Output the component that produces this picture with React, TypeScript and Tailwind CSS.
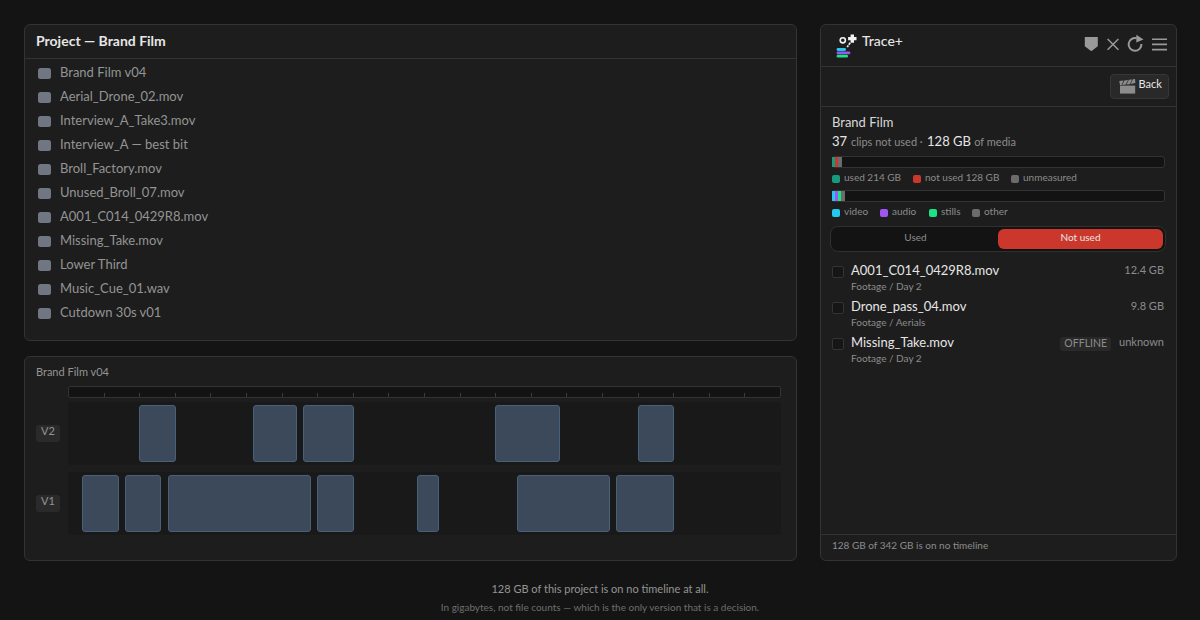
import { Fragment } from "react";

interface Clip {
  start: number;
  span: number;
}

interface Segment {
  label: string;
  swatch: string;
  gap: string;
}

const bin = [
  "Brand Film v04",
  "Aerial_Drone_02.mov",
  "Interview_A_Take3.mov",
  "Interview_A — best bit",
  "Broll_Factory.mov",
  "Unused_Broll_07.mov",
  "A001_C014_0429R8.mov",
  "Missing_Take.mov",
  "Lower Third",
  "Music_Cue_01.wav",
  "Cutdown 30s v01",
];

const v2: Clip[] = [
  { start: 10, span: 5 },
  { start: 26, span: 6 },
  { start: 33, span: 7 },
  { start: 60, span: 9 },
  { start: 80, span: 5 },
];

const v1: Clip[] = [
  { start: 2, span: 5 },
  { start: 8, span: 5 },
  { start: 14, span: 20 },
  { start: 35, span: 5 },
  { start: 49, span: 3 },
  { start: 63, span: 13 },
  { start: 77, span: 8 },
];

const usage: Segment[] = [
  { label: "used 214 GB", swatch: "bg-[#16997c]", gap: "w-[81px]" },
  { label: "not used 128 GB", swatch: "bg-[#cb382b]", gap: "w-[98px]" },
  { label: "unmeasured", swatch: "bg-[#6b6b6b]", gap: "w-[90px]" },
];

const kinds: Segment[] = [
  { label: "video", swatch: "bg-[#22c8f0]", gap: "w-12" },
  { label: "audio", swatch: "bg-[#a055f0]", gap: "w-[49px]" },
  { label: "stills", swatch: "bg-[#1be283]", gap: "w-[43px]" },
  { label: "other", swatch: "bg-[#6b6b6b]", gap: "w-[60px]" },
];

const files = [
  { name: "A001_C014_0429R8.mov", path: "Footage / Day 2", size: "12.4 GB", offline: false },
  { name: "Drone_pass_04.mov", path: "Footage / Aerials", size: "9.8 GB", offline: false },
  { name: "Missing_Take.mov", path: "Footage / Day 2", size: "unknown", offline: true },
];

function Logo() {
  return (
    <svg className="h-6 w-[22px]" viewBox="0 0 22 24" fill="none">
      <circle cx="6.8" cy="6.3" r="2.6" stroke="#f2f2f2" strokeWidth="1.6" />
      <path d="M16.3 .4v8.4M12.1 4.6h8.4" stroke="#f2f2f2" strokeWidth="3.4" />
      <path d="M14.2 8.8l-3 4.2" stroke="#f2f2f2" strokeWidth="1.7" strokeDasharray="2.4 .8" />
      <rect x=".6" y="14" width="9.4" height="2.9" rx="1.3" fill="#22c8f0" />
      <rect x=".6" y="17.4" width="13.8" height="2.9" rx="1.3" fill="#a055f0" />
      <rect x=".6" y="20.8" width="11.4" height="2.8" rx="1.3" fill="#1be283" />
    </svg>
  );
}

function HeaderIcons() {
  return (
    <svg className="h-5 w-[84px]" viewBox="0 0 84 20" fill="none" stroke="#999" strokeWidth="2">
      <path d="M.8 3h13v9.2L7.3 17.2.8 12.2z" fill="#999" stroke="none" />
      <path d="M23.6 5l10.8 10.8M34.4 5L23.6 15.8" strokeWidth="1.5" />
      <path d="M52.6 4.2A6.4 6.4 0 1 0 57.4 10" />
      <path d="M52.3 .8l7.2 4.6-7.2 3.2z" fill="#999" stroke="none" />
      <path d="M68 5.2h15M68 10.4h15M68 15.6h15" strokeWidth="1.6" />
    </svg>
  );
}

function Clapper() {
  return (
    <svg className="h-4 w-[17px]" viewBox="0 0 17 16" fill="#8c8c8c">
      <path d="M1 6.6h15.2v8H1z" />
      <path d="M.3 2l4.2-.5L2.6 6H1zM5.3 1.4l3.8-.5L6.7 5.6 3.3 6zM9.9.8l3.2-.4L10.8 5.2 7.5 5.6zM13.9.3l2.1-.2.4 4-4.8.9z" />
    </svg>
  );
}

function Track({ name, clips }: { name: string; clips: Clip[] }) {
  return (
    <div className="flex h-[63px] items-start">
      <div className="mt-[23px] mr-2 h-[17px] w-6 rounded-[3px] bg-[#2a2a2a] text-center text-[11px] leading-[11px] text-[#949494]">
        {name}
      </div>
      <div className="relative h-full w-[713px] rounded-[3px] bg-[#191919]">
        {clips.map((clip) => (
          <div
            key={clip.start}
            className="absolute top-[3px] h-[57px] rounded-[3px] border border-[#486079] bg-[#3b495b]"
            style={{ left: clip.start * 7.12, width: clip.span * 7.12 + 0.8 }}
          />
        ))}
      </div>
    </div>
  );
}

function Legend({ items }: { items: Segment[] }) {
  return (
    <div className="flex h-3 items-center text-[10px] leading-3 text-[#8c8c8c]">
      {items.map((item) => (
        <div key={item.label} className={`flex shrink-0 items-center whitespace-nowrap ${item.gap}`}>
          <span className={`mt-[3px] mr-1 size-2 shrink-0 rounded-[2px] ${item.swatch}`} />
          {item.label}
        </div>
      ))}
    </div>
  );
}

function Meter({ items }: { items: Segment[] }) {
  return (
    <div className="flex h-3 w-[333px] rounded-[3px] border border-[#333] bg-[#131313]">
      <div className="-ml-px flex">
        {items.map((item) => (
          <div key={item.label} className={`h-full w-[3px] last:w-[3.5px] ${item.swatch}`} />
        ))}
      </div>
    </div>
  );
}

export default function App() {
  return (
    <div className="h-[620px] w-[1200px] overflow-hidden bg-[#141414] pt-6 font-[Lato,sans-serif] text-[#e6e6e6]">
      <div className="flex h-[537px] gap-[23px] pl-6">
        <div className="flex w-[773px] flex-col gap-[15px]">
          <section className="h-[317px] rounded-md border border-[#333] bg-[#1d1d1d]">
            <h1 className="h-[34px] border-b border-[#333] pl-[11px] text-sm leading-[31px] font-bold">
              Project — Brand Film
            </h1>
            <ul className="pt-px pl-[13px] text-[13px] text-[#949494]">
              {bin.map((name) => (
                <li key={name} className="flex h-6 items-center gap-[9px] leading-6">
                  <span className="mt-[3px] h-[11px] w-[13px] rounded-[2.5px] bg-[#707783]" />
                  {name}
                </li>
              ))}
            </ul>
          </section>

          <section className="h-[205px] rounded-md border border-[#333] bg-[#1d1d1d] pt-2 pl-[11px]">
            <h2 className="text-[11px] leading-[13px] text-[#949494]">Brand Film v04</h2>
            <div className="mt-2 mb-1 ml-8 flex h-3 w-[713px] items-end rounded-[2px] border border-[#333] bg-[#131313]">
              {Array.from({ length: 19 }, (_, i) => (
                <Fragment key={i}>
                  <span className="w-[34.6px]" />
                  <span className="h-1 w-px bg-[#3a3a3a]" />
                </Fragment>
              ))}
            </div>
            <div className="flex flex-col gap-[7px]">
              <Track name="V2" clips={v2} />
              <Track name="V1" clips={v1} />
            </div>
          </section>
        </div>

        <aside className="flex w-[357px] flex-col rounded-md border border-[#333] bg-[#1d1d1d]">
          <header className="flex h-[42px] shrink-0 items-start border-b border-[#333] pt-[9px] pl-[15px]">
            <Logo />
            <span className="ml-1 text-sm leading-[14px] font-medium">Trace+</span>
            <div className="mr-2 ml-auto">
              <HeaderIcons />
            </div>
          </header>
          <div className="flex h-10 shrink-0 justify-end border-b border-[#333] pt-[7px] pr-[7px]">
            <button
              type="button"
              className="flex h-[25px] w-[59px] items-start rounded border border-[#363636] bg-[#292929] pt-1 pl-2 text-[11px]"
            >
              <Clapper />
              <span className="ml-[2.5px] leading-[10px]">Back</span>
            </button>
          </div>

          <div className="px-[11px] pt-[6px]">
            <div className="text-[13px] leading-[18px] text-[#d8d8d8]">Brand Film</div>
            <div className="mt-px h-[19px] text-[13px] leading-[18px] whitespace-nowrap">
              37<span className="mr-[1.5px] ml-px text-[11px] text-[#8c8c8c]"> clips not used · </span>
              128 GB<span className="ml-[0.5px] text-[11px] text-[#8c8c8c]"> of media</span>
            </div>
            <div className="mt-[5px]">
              <Meter items={usage} />
            </div>
            <div className="mt-[3px]">
              <Legend items={usage} />
            </div>
            <div className="mt-[7px]">
              <Meter items={kinds} />
            </div>
            <div className="mt-[3px]">
              <Legend items={kinds} />
            </div>
            <div className="mt-[9px] -ml-[2px] flex h-[26px] w-[336px] rounded-lg border border-[#303030] bg-[#131313] p-[2px] text-center text-[10px] leading-4">
              <div className="flex-1 text-[#8c8c8c]">Used</div>
              <div className="flex-1 rounded-md bg-[#cb382b]">Not used</div>
            </div>
          </div>

          <ul className="pt-[10px] pr-3 pl-[11px]">
            {files.map((file) => (
              <li key={file.name} className="flex h-9 items-start">
                <span className="mt-1 mr-[7px] size-3 rounded-[2px] border border-[#333] bg-[#161616]" />
                <div>
                  <div className="text-[13px] leading-4">{file.name}</div>
                  <div className="text-[10px] leading-4 text-[#8c8c8c]">{file.path}</div>
                </div>
                <div className="ml-auto flex items-start text-[11px] leading-4 text-[#8c8c8c]">
                  {file.offline && (
                    <span className="mt-[3px] mr-2 h-[14px] rounded-[3px] bg-[#292929] px-1 text-[10.5px] leading-[12px]">
                      OFFLINE
                    </span>
                  )}
                  {file.size}
                </div>
              </li>
            ))}
          </ul>

          <footer className="mt-auto h-[26px] border-t border-[#333] pl-[11px] text-[10px] leading-5 text-[#8c8c8c]">
            128 GB of 342 GB is on no timeline
          </footer>
        </aside>
      </div>

      <div className="pt-5 text-center">
        <p className="text-[11px] leading-4 text-[#949494]">128 GB of this project is on no timeline at all.</p>
        <p className="mt-[2px] text-[10px] leading-4 text-[#6e6e6e]">
          In gigabytes, not file counts — which is the only version that is a decision.
        </p>
      </div>
    </div>
  );
}
